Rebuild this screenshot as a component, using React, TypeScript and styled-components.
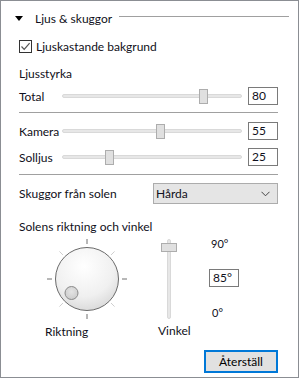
import React from "react";
import styled, { createGlobalStyle } from "styled-components";

const Global = createGlobalStyle`
  html, body { margin: 0; padding: 0; background: #ffffff; }
  body { font-family: "Segoe UI", Lato, "Noto Sans", sans-serif; font-size: 12px; color: #101020; }
`;

const Frame = styled.div`
  width: 299px;
  height: 378px;
  box-sizing: border-box;
  border: 1px solid #8b8e93;
  background: #fff;
  padding: 0 20px 0 18px;
  display: flex;
  flex-direction: column;
`;

const Header = styled.div`
  display: flex;
  align-items: center;
  height: 16px;
  margin-top: 9px;
  margin-left: -4px;
  margin-right: -11px;
`;

const Triangle = styled.span`
  width: 0;
  height: 0;
  border-left: 4px solid transparent;
  border-right: 4px solid transparent;
  border-top: 5px solid #000;
  margin-right: 12px;
  margin-top: 1px;
`;

const HeaderText = styled.span`
  white-space: nowrap;
`;

const HeaderLine = styled.div`
  flex: 1;
  height: 1px;
  background: #a0a0a0;
  margin-left: 7px;
  margin-top: -3px;
`;

const CheckRow = styled.label`
  display: flex;
  align-items: center;
  margin-top: 13px;
  height: 14px;
`;

const Box = styled.span`
  width: 13px;
  height: 13px;
  box-sizing: border-box;
  border: 1px solid #333;
  background: #fff;
  display: inline-flex;
  align-items: center;
  justify-content: center;
  margin-right: 4px;
`;

const Heading = styled.div<{ $top: number }>`
  margin-top: ${(p) => p.$top}px;
  height: 16px;
  line-height: 16px;
  white-space: nowrap;
`;

const SliderRow = styled.div<{ $top: number }>`
  display: flex;
  align-items: center;
  margin-top: ${(p) => p.$top}px;
  height: 18px;
`;

const RowLabel = styled.span`
  width: 43px;
  flex: none;
`;

const Track = styled.div`
  position: relative;
  width: 180px;
  height: 15px;
  flex: none;
  &::before {
    content: "";
    position: absolute;
    left: 0;
    right: 0;
    top: 5px;
    height: 4px;
    border-radius: 2px;
    background: #e7e7e7;
    border: 1px solid #d9d9d9;
    box-sizing: border-box;
  }
`;

const Thumb = styled.div`
  position: absolute;
  top: 0;
  width: 9px;
  height: 15px;
  box-sizing: border-box;
  background: #e0e0e0;
  border: 1px solid #adadad;
`;

const ValueBox = styled.div<{ $ml?: number; $mt?: number }>`
  width: 30px;
  height: 18px;
  box-sizing: border-box;
  border: 1px solid #7a7a7a;
  padding-left: 3px;
  line-height: 16px;
  font-size: 12px;
  margin-left: ${(p) => p.$ml ?? 6}px;
  margin-top: ${(p) => p.$mt ?? 0}px;
  flex: none;
`;

const Separator = styled.div<{ $top: number }>`
  height: 1px;
  background: #a0a0a0;
  margin-top: ${(p) => p.$top}px;
`;

const SelectRow = styled.div`
  display: flex;
  align-items: center;
  margin-top: 8px;
  height: 21px;
`;

const SelectLabel = styled.span`
  width: 134px;
  flex: none;
`;

const Select = styled.div`
  flex: 1;
  height: 21px;
  box-sizing: border-box;
  border: 1px solid #acacac;
  background: #e5e5e5;
  display: flex;
  align-items: center;
  justify-content: space-between;
  padding: 0 7px 0 2px;
`;

const Lower = styled.div`
  display: flex;
  margin-top: 4px;
  height: 110px;
`;

const KnobCol = styled.div`
  display: flex;
  flex-direction: column;
  width: 134px;
  flex: none;
`;

const KnobWrap = styled.div`
  margin-left: 28px;
  margin-top: 0;
  width: 80px;
  height: 80px;
`;

const BottomLabel = styled.div<{ $left: number; $top: number }>`
  margin-left: ${(p) => p.$left}px;
  margin-top: ${(p) => p.$top}px;
  line-height: 16px;
`;

const VCol = styled.div`
  display: flex;
  flex-direction: column;
  width: 56px;
  flex: none;
`;

const VTrack = styled.div`
  position: relative;
  width: 16px;
  height: 80px;
  margin-left: 8px;
  margin-top: 0;
  &::before {
    content: "";
    position: absolute;
    left: 6px;
    top: 0;
    bottom: 0;
    width: 4px;
    border-radius: 2px;
    background: #e7e7e7;
    border: 1px solid #d9d9d9;
    box-sizing: border-box;
  }
`;

const VThumb = styled.div`
  position: absolute;
  left: 0;
  width: 16px;
  height: 9px;
  box-sizing: border-box;
  background: #e0e0e0;
  border: 1px solid #adadad;
`;

const ScaleCol = styled.div`
  display: flex;
  flex-direction: column;
  font-size: 11px;
`;

const ScaleText = styled.div<{ $top: number; $left: number }>`
  margin-top: ${(p) => p.$top}px;
  margin-left: ${(p) => p.$left}px;
  line-height: 14px;
`;

const Footer = styled.div`
  display: flex;
  justify-content: flex-end;
  margin-top: auto;
  margin-bottom: 4px;
`;

const Button = styled.button`
  width: 74px;
  height: 23px;
  box-sizing: border-box;
  border: 2px solid #0078d7;
  background: #e1e1e1;
  font: inherit;
  color: #000;
  padding: 0;
`;

function HSlider({ label, value, top }: { label: string; value: number; top: number }) {
  const left = (value / 100) * (180 - 9);
  return (
    <SliderRow $top={top}>
      <RowLabel>{label}</RowLabel>
      <Track>
        <Thumb style={{ left: `${left}px` }} />
      </Track>
      <ValueBox>{value}</ValueBox>
    </SliderRow>
  );
}

function Knob() {
  const cx = 40;
  const cy = 40;
  const ticks = [0, 45, 90, 135, 180, 225, 270, 315];
  return (
    <svg width="80" height="80" viewBox="0 0 80 80">
      <defs>
        <radialGradient id="kg" cx="0.45" cy="0.3" r="0.8">
          <stop offset="0" stopColor="#ffffff" />
          <stop offset="0.6" stopColor="#f0f0f0" />
          <stop offset="1" stopColor="#d2d2d2" />
        </radialGradient>
        <radialGradient id="dg" cx="0.5" cy="0.4" r="0.7">
          <stop offset="0" stopColor="#e4e4e4" />
          <stop offset="1" stopColor="#c8c8c8" />
        </radialGradient>
      </defs>
      {ticks.map((a) => {
        const r = (a * Math.PI) / 180;
        const card = a % 90 === 0;
        const r1 = card ? 35 : 34;
        const r2 = card ? 40 : 39;
        return (
          <line
            key={a}
            x1={cx + Math.sin(r) * r1}
            y1={cy - Math.cos(r) * r1}
            x2={cx + Math.sin(r) * r2}
            y2={cy - Math.cos(r) * r2}
            stroke={card ? "#707070" : "#cfcfcf"}
            strokeWidth="1"
          />
        );
      })}
      <circle cx={cx} cy={cy} r="31.5" fill="url(#kg)" stroke="#6a6a6a" strokeWidth="1" />
      <circle cx={cx - 15.5} cy={cy + 14} r="6.5" fill="url(#dg)" stroke="#8a8a8a" strokeWidth="1" />
    </svg>
  );
}

export default function App() {
  const angle = 85;
  return (
    <>
      <Global />
      <Frame>
        <Header>
          <Triangle />
          <HeaderText>Ljus &amp; skuggor</HeaderText>
          <HeaderLine />
        </Header>
        <CheckRow>
          <Box>
            <svg width="11" height="11" viewBox="0 0 11 11">
              <path d="M1.5 5.5 L4.2 8.3 L9.6 2.2" fill="none" stroke="#555" strokeWidth="1.2" />
            </svg>
          </Box>
          <span>Ljuskastande bakgrund</span>
        </CheckRow>
        <Heading $top={13}>Ljusstyrka</Heading>
        <HSlider label="Total" value={80} top={5} />
        <Separator $top={7} />
        <HSlider label="Kamera" value={55} top={9} />
        <HSlider label="Solljus" value={25} top={8} />
        <Separator $top={8} />
        <SelectRow>
          <SelectLabel>Skuggor från solen</SelectLabel>
          <Select>
            <span>Hårda</span>
            <svg width="9" height="6" viewBox="0 0 9 6">
              <path d="M0.5 0.8 L4.5 4.8 L8.5 0.8" fill="none" stroke="#444" strokeWidth="1" />
            </svg>
          </Select>
        </SelectRow>
        <Heading $top={15}>Solens riktning och vinkel</Heading>
        <Lower>
          <KnobCol>
            <KnobWrap>
              <Knob />
            </KnobWrap>
            <BottomLabel $left={26} $top={5}>Riktning</BottomLabel>
          </KnobCol>
          <VCol>
            <VTrack>
              <VThumb style={{ top: `${(1 - angle / 90) * 71}px` }} />
            </VTrack>
            <BottomLabel $left={5} $top={4}>Vinkel</BottomLabel>
          </VCol>
          <ScaleCol>
            <ScaleText $top={-2} $left={2}>90°</ScaleText>
            <ValueBox $ml={0} $mt={18}>{angle}°</ValueBox>
            <ScaleText $top={19} $left={3}>0°</ScaleText>
          </ScaleCol>
        </Lower>
        <Footer>
          <Button>Återställ</Button>
        </Footer>
      </Frame>
    </>
  );
}
